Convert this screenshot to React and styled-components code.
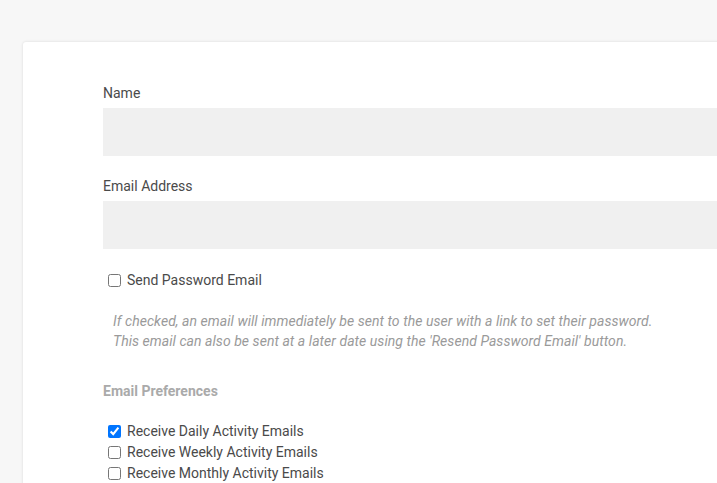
import React from "react";
import styled, { createGlobalStyle } from "styled-components";

const GlobalStyle = createGlobalStyle`
  html, body {
    margin: 0;
    padding: 0;
    background: #f7f7f7;
    font-family: Roboto, "Liberation Sans", Arial, sans-serif;
    overflow: hidden;
  }
`;

const Page = styled.div`
  padding: 42px 0 0 23px;
  height: 483px;
  box-sizing: border-box;
`;

const Card = styled.div`
  width: 800px;
  min-height: 600px;
  background: #fff;
  border-radius: 3px;
  box-shadow: 0 0 3px rgba(0, 0, 0, 0.12);
  padding: 43px 80px 0;
  box-sizing: border-box;
`;

const Group = styled.div`
  margin-bottom: 22px;
`;

const Label = styled.label`
  display: block;
  font-size: 14px;
  line-height: 16px;
  color: #4a4a4a;
  margin-bottom: 7px;
`;

const Input = styled.input`
  display: block;
  width: 100%;
  height: 48px;
  border: none;
  background: #f0f0f0;
  box-sizing: border-box;
  outline: none;
`;

const CheckRow = styled.label`
  display: flex;
  align-items: center;
  font-size: 14px;
  line-height: ${(p) => p.$lh || 21}px;
  color: #4a4a4a;

  input {
    width: 13px;
    height: 13px;
    margin: 0 6px 0 5px;
  }
`;

const Help = styled.p`
  margin: 22px 0 0 10px;
  font-size: 14px;
  line-height: 20px;
  font-style: italic;
  letter-spacing: 0.05px;
  color: #9a9a9a;
`;

const SectionTitle = styled.h4`
  margin: 32px 0 22px;
  font-size: 14px;
  line-height: 16px;
  font-weight: 700;
  color: #aaa;
`;

export default function App() {
  return (
    <Page>
      <GlobalStyle />
      <Card>
        <Group>
          <Label>Name</Label>
          <Input />
        </Group>
        <Group>
          <Label>Email Address</Label>
          <Input />
        </Group>
        <CheckRow $lh={18}>
          <input type="checkbox" />
          Send Password Email
        </CheckRow>
        <Help>
          If checked, an email will immediately be sent to the user with a link to set their password.
          <br />
          This email can also be sent at a later date using the 'Resend Password Email' button.
        </Help>
        <SectionTitle>Email Preferences</SectionTitle>
        <CheckRow>
          <input type="checkbox" defaultChecked />
          Receive Daily Activity Emails
        </CheckRow>
        <CheckRow>
          <input type="checkbox" />
          Receive Weekly Activity Emails
        </CheckRow>
        <CheckRow>
          <input type="checkbox" />
          Receive Monthly Activity Emails
        </CheckRow>
      </Card>
    </Page>
  );
}
